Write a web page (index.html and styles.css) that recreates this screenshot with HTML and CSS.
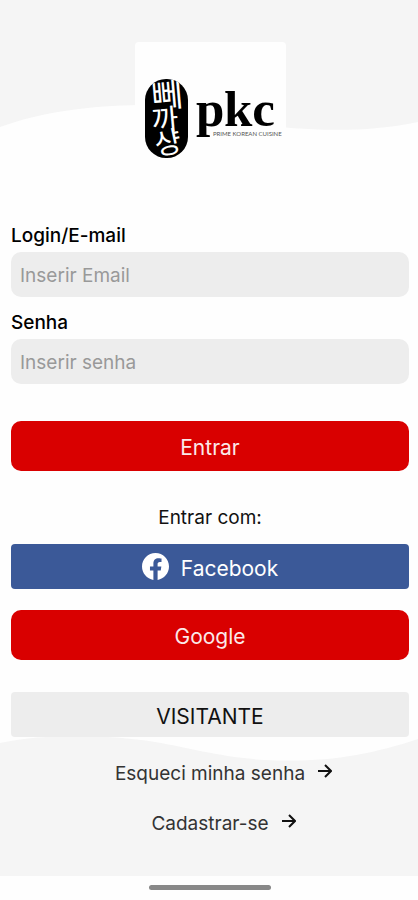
FILE: index.html
```html
<!DOCTYPE html>
<html lang="pt-BR">
<head>
  <meta charset="utf-8">
  <meta name="viewport" content="width=device-width, initial-scale=1">
  <title>PKC - Login</title>
  <link rel="stylesheet" href="styles.css">
</head>
<body>
  <div class="screen">
    <svg class="wave wave-top" viewBox="0 0 418 131" preserveAspectRatio="none" aria-hidden="true">
      <path d="M0 0H418V122C370 132 325 131 280 127C230 120 205 107 140 105C90 106 45 111 0 127Z"/>
    </svg>
    <svg class="wave wave-bottom" viewBox="0 0 418 140" preserveAspectRatio="none" aria-hidden="true">
      <path d="M0 7C50-3 108-1 155 6C190 12 220 21 265 24C325 27 370 19 418 3V140H0Z"/>
    </svg>

    <header class="brand">
      <svg class="logo" viewBox="0 0 151 151" role="img" aria-label="PKC Prime Korean Cuisine">
        <defs>
          <clipPath id="seal"><rect x="10" y="37" width="43" height="79" rx="21"/></clipPath>
        </defs>
        <rect x="10" y="37" width="43" height="79" rx="21"/>
        <g class="seal-text" clip-path="url(#seal)">
          <text x="32" y="65" transform="rotate(-5 32 54)" class="seal-large">뻬</text>
          <text x="30" y="88" transform="rotate(-5 31 79)" class="seal-small">까</text>
          <text x="33" y="111" transform="rotate(-12 34 101)" class="seal-small">샹</text>
        </g>
        <text x="61" y="84" class="wordmark">p</text>
        <text x="89" y="84" class="wordmark">kc</text>
        <text x="78" y="94" class="tagline">PRIME KOREAN CUISINE</text>
      </svg>
    </header>

    <main class="content">
      <form class="login">
        <label class="label" for="email">Login/E-mail</label>
        <input class="field" id="email" type="email" placeholder="Inserir Email">
        <label class="label" for="senha">Senha</label>
        <input class="field" id="senha" type="password" placeholder="Inserir senha">
        <button class="button primary" type="submit">Entrar</button>
      </form>

      <section class="social">
        <p class="caption">Entrar com:</p>
        <button class="button facebook" type="button">
          <svg class="facebook-icon" viewBox="0 0 24 24" aria-hidden="true">
            <path d="M24 12.07C24 5.41 18.63 0 12 0S0 5.41 0 12.07C0 18.1 4.39 23.1 10.13 24v-8.44H7.08v-3.49h3.05V9.41c0-3.02 1.79-4.69 4.53-4.69 1.31 0 2.68.24 2.68.24v2.97h-1.51c-1.49 0-1.96.93-1.96 1.89v2.25h3.33l-.53 3.49h-2.8V24C19.61 23.1 24 18.1 24 12.07Z"/>
          </svg>
          <span>Facebook</span>
        </button>
        <button class="button primary" type="button">Google</button>
      </section>

      <button class="button guest" type="button">VISITANTE</button>

      <nav class="links">
        <a class="link" href="#senha">
          <span class="link-text">Esqueci minha senha</span>
          <svg class="arrow" viewBox="0 0 14 14" aria-hidden="true"><path d="M0 7H13M7 1L13 7L7 13"/></svg>
        </a>
        <a class="link" href="#cadastro">
          <span class="link-text">Cadastrar-se</span>
          <svg class="arrow" viewBox="0 0 14 14" aria-hidden="true"><path d="M0 7H13M7 1L13 7L7 13"/></svg>
        </a>
      </nav>
    </main>
  </div>
  <footer class="system-bar"><span class="handle"></span></footer>
</body>
</html>
```

FILE: styles.css
```css
* {
  box-sizing: border-box;
}

body {
  margin: 0;
  min-height: 100vh;
  display: flex;
  flex-direction: column;
  background: #fefefe;
  color: #111;
  font-family: Inter, "Noto Sans", sans-serif;
  font-size: 19px;
  line-height: 24px;
}

.screen {
  position: relative;
  flex: 1;
}

.wave {
  position: absolute;
  left: 0;
  width: 100%;
  fill: #f5f5f5;
}

.wave-top {
  top: 0;
  height: 131px;
}

.wave-bottom {
  bottom: 0;
  height: 140px;
}

.brand {
  position: relative;
  display: flex;
  justify-content: center;
  padding: 42px 9px 0 11px;
}

.logo {
  width: 151px;
  height: 151px;
  border-radius: 4px;
  background: #fefefe;
}

.seal-text {
  fill: #fff;
  font-family: "Noto Sans CJK KR", sans-serif;
  text-anchor: middle;
}

.seal-large {
  font-size: 34px;
}

.seal-small {
  font-size: 29px;
}

.wordmark {
  font-family: "Liberation Serif", serif;
  font-size: 51px;
  font-weight: 700;
}

.tagline {
  fill: #555;
  font-family: Lato, sans-serif;
  font-size: 6px;
}

.content {
  position: relative;
  padding: 31px 9px 40px 11px;
}

.login,
.social {
  display: flex;
  flex-direction: column;
}

.label {
  margin-bottom: 4px;
  font-weight: 500;
  color: #000;
}

.field {
  width: 100%;
  height: 45px;
  margin: 0 0 14px;
  padding: 2px 9px 0;
  border: 0;
  border-radius: 10px;
  background: #ededed;
  color: #111;
  font: inherit;
}

.field::placeholder {
  color: #999;
  opacity: 1;
}

.button {
  display: flex;
  align-items: center;
  justify-content: center;
  width: 100%;
  height: 45px;
  padding: 4px 0 0;
  border: 0;
  border-radius: 4px;
  font: inherit;
  font-size: 21px;
  cursor: pointer;
}

.primary {
  height: 50px;
  border-radius: 10px;
  background: #d90000;
  color: #fbe9e9;
}

.login .primary {
  margin-top: 23px;
}

.caption {
  margin: 35px 0 14px;
  text-align: center;
}

.facebook {
  gap: 12px;
  margin-bottom: 21px;
  background: #3b5998;
  color: #fff;
}

.facebook-icon {
  width: 27px;
  height: 27px;
  margin-bottom: 4px;
  fill: #fff;
}

.guest {
  margin-top: 32px;
  background: #ededed;
  color: #111;
}

.links {
  display: flex;
  flex-direction: column;
  gap: 26px;
  margin-top: 25px;
}

.link {
  display: grid;
  grid-template-columns: 1fr auto 1fr;
  column-gap: 13px;
  color: #333;
  text-decoration: none;
}

.link-text {
  grid-column: 2;
}

.arrow {
  width: 14px;
  height: 14px;
  margin-top: 2px;
  fill: none;
  stroke: #111;
  stroke-width: 2;
}

.system-bar {
  display: flex;
  justify-content: center;
  height: 24px;
  padding: 9px 11px 9px 13px;
  background: #fefefe;
}

.handle {
  width: 122px;
  height: 5px;
  border-radius: 3px;
  background: #888;
}
```
